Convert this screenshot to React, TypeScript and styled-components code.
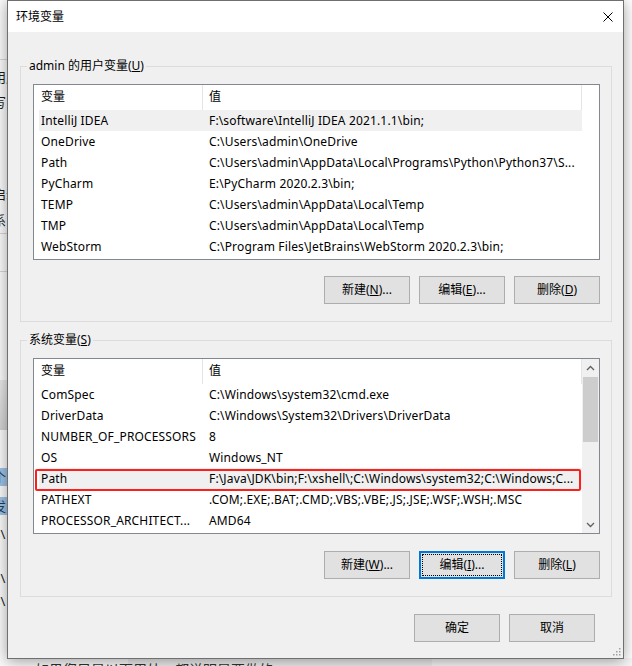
import React from "react";
import styled, { createGlobalStyle, css } from "styled-components";

const FONT = `"Noto Sans", "Noto Sans CJK SC", sans-serif`;

const GlobalStyle = createGlobalStyle`
  html, body { margin: 0; padding: 0; }
  body {
    width: 632px;
    height: 666px;
    overflow: hidden;
    background: #f3f3f3;
    font-family: ${FONT};
    -webkit-font-smoothing: antialiased;
  }
  * { box-sizing: border-box; }
`;

/* ---------- desktop & background window ---------- */

const Desktop = styled.div`
  position: relative;
  width: 632px;
  height: 666px;
  overflow: hidden;
`;

const BackWindow = styled.div`
  display: flex;
  flex-direction: column;
  height: 666px;
  background: #ffffff;
`;

const BackMain = styled.div`
  flex: 1;
  display: flex;
`;

const LeftStrip = styled.div`
  width: 40px;
  display: flex;
  flex-direction: column;
  background: #fbfbfb;
`;

const StripSpace = styled.div<{ $h: number }>`
  height: ${(p) => p.$h}px;
  flex: none;
`;

const StripLine = styled.div`
  height: 1px;
  flex: none;
  background: #d6d6d6;
`;

const StripBand = styled.div<{ $h: number }>`
  height: ${(p) => p.$h}px;
  flex: none;
  background: linear-gradient(#e9e9e9, #d2d2d2);
`;

const StripGlyph = styled.div<{ $hl?: boolean }>`
  height: 18px;
  flex: none;
  font-size: 13px;
  line-height: 18px;
  white-space: nowrap;
  color: #1b1b1b;
  margin-left: -7px;
  ${(p) =>
    p.$hl &&
    css`
      background: #9ec2e4;
      color: #203a5a;
    `}
`;

const BackBottom = styled.div`
  height: 8px;
  flex: none;
  background: linear-gradient(90deg, #fafafa 0 128px, #ececec 128px 432px, #f6f6f6 432px);
  overflow: hidden;
  padding-left: 35px;
  padding-top: 3px;
`;

const BackBottomText = styled.div`
  font-size: 14px;
  line-height: 18px;
  color: #333;
  white-space: nowrap;
`;

/* ---------- dialog ---------- */

const Dialog = styled.div`
  position: absolute;
  left: 7px;
  top: 0;
  width: 617px;
  height: 659px;
  border: 1px solid #6f6f6f;
  background: #f0f0f0;
  display: flex;
  flex-direction: column;
  box-shadow: 0 2px 14px rgba(0, 0, 0, 0.38);
  color: #000;
  font-size: 12px;
`;

const TitleBar = styled.div`
  height: 31px;
  flex: none;
  background: #ffffff;
  display: flex;
  align-items: center;
  justify-content: space-between;
  padding: 0 8px 0 8px;
`;

const TitleText = styled.div`
  font-size: 12px;
  line-height: 31px;
`;

const CloseButton = styled.div`
  width: 10px;
  height: 10px;
  margin-right: 2px;
  display: flex;
`;

const Body = styled.div`
  flex: 1;
  display: flex;
  flex-direction: column;
  padding: 26px 11px 0 12px;
  position: relative;
`;

const GroupBox = styled.fieldset<{ $gap?: number }>`
  margin: ${(p) => p.$gap ?? 0}px 0 0 0;
  padding: 10px 11px 17px 12px;
  border: 1px solid #dcdcdc;
  min-width: 0;
`;

const Legend = styled.legend`
  font-size: 12px;
  line-height: 16px;
  padding: 0 2px;
  margin-left: -6px;
  white-space: nowrap;
`;

const ListView = styled.div`
  height: 176px;
  border: 1px solid #828790;
  background: #ffffff;
  display: flex;
  overflow: hidden;
`;

const ListContent = styled.div`
  width: 548px;
  flex: none;
  display: flex;
  flex-direction: column;
`;

const HeaderRow = styled.div`
  display: grid;
  grid-template-columns: 169px 379px;
  height: 25px;
  flex: none;
`;

const HeaderCell = styled.div<{ $pad: number }>`
  border-right: 1px solid #e5e5e5;
  padding-left: ${(p) => p.$pad}px;
  line-height: 24px;
  font-size: 12px;
  white-space: nowrap;
`;

const Row = styled.div<{ $selected?: boolean; $marked?: boolean }>`
  position: relative;
  display: grid;
  grid-template-columns: 163px 380px;
  height: 21px;
  flex: none;
  margin-left: 5px;
  background: ${(p) => (p.$selected ? "#f0f0f0" : "transparent")};
  ${(p) =>
    p.$marked &&
    css`
      &::after {
        content: "";
        position: absolute;
        left: -4px;
        right: 1px;
        top: 1px;
        bottom: -2px;
        border: 2px solid #ff1f1a;
        border-radius: 2px;
        pointer-events: none;
      }
    `}
`;

const Cell = styled.div<{ $pad: number }>`
  padding-left: ${(p) => p.$pad}px;
  font-size: 12px;
  line-height: 21px;
  letter-spacing: 0.15px;
  white-space: nowrap;
  overflow: hidden;
`;

const ScrollBar = styled.div`
  width: 17px;
  flex: none;
  background: #f0f0f0;
  display: flex;
  flex-direction: column;
  margin-left: auto;
`;

const ScrollArrow = styled.div`
  height: 17px;
  flex: none;
  display: flex;
  align-items: center;
  justify-content: center;
`;

const ScrollThumb = styled.div`
  height: 65px;
  margin: 1px 1px 0 1px;
  background: #cdcdcd;
  flex: none;
`;

const ScrollTrack = styled.div`
  flex: 1;
`;

const ButtonRow = styled.div<{ $gap: number; $top: number; $right?: number }>`
  display: flex;
  justify-content: flex-end;
  gap: ${(p) => p.$gap}px;
  margin-top: ${(p) => p.$top}px;
  padding-right: ${(p) => p.$right ?? 0}px;
`;

const Button = styled.div<{ $focused?: boolean }>`
  width: 86px;
  height: 28px;
  background: #e1e1e1;
  border: 1px solid #adadad;
  display: flex;
  align-items: center;
  justify-content: center;
  font-size: 12px;
  line-height: 16px;
  white-space: nowrap;
  ${(p) =>
    p.$focused &&
    css`
      border: 2px solid #0078d7;
      outline: 1px dotted #000;
      outline-offset: -4px;
    `}
`;

const Grip = styled.div`
  position: absolute;
  right: 2px;
  bottom: 2px;
  width: 10px;
  height: 10px;
  display: flex;
`;

/* ---------- data ---------- */

type Var = { name: string; value: string; selected?: boolean; marked?: boolean };

const userVars: Var[] = [
  { name: "IntelliJ IDEA", value: "F:\\software\\IntelliJ IDEA 2021.1.1\\bin;", selected: true },
  { name: "OneDrive", value: "C:\\Users\\admin\\OneDrive" },
  { name: "Path", value: "C:\\Users\\admin\\AppData\\Local\\Programs\\Python\\Python37\\S..." },
  { name: "PyCharm", value: "E:\\PyCharm 2020.2.3\\bin;" },
  { name: "TEMP", value: "C:\\Users\\admin\\AppData\\Local\\Temp" },
  { name: "TMP", value: "C:\\Users\\admin\\AppData\\Local\\Temp" },
  { name: "WebStorm", value: "C:\\Program Files\\JetBrains\\WebStorm 2020.2.3\\bin;" },
];

const sysVars: Var[] = [
  { name: "ComSpec", value: "C:\\Windows\\system32\\cmd.exe" },
  { name: "DriverData", value: "C:\\Windows\\System32\\Drivers\\DriverData" },
  { name: "NUMBER_OF_PROCESSORS", value: "8" },
  { name: "OS", value: "Windows_NT" },
  {
    name: "Path",
    value: "F:\\Java\\JDK\\bin;F:\\xshell\\;C:\\Windows\\system32;C:\\Windows;C...",
    selected: true,
    marked: true,
  },
  { name: "PATHEXT", value: ".COM;.EXE;.BAT;.CMD;.VBS;.VBE;.JS;.JSE;.WSF;.WSH;.MSC" },
  { name: "PROCESSOR_ARCHITECT...", value: "AMD64" },
];

/* ---------- pieces ---------- */

const Chevron = ({ up }: { up?: boolean }) => (
  <svg width="9" height="6" viewBox="0 0 9 6">
    <polyline
      points={up ? "1,5 4.5,1.5 8,5" : "1,1 4.5,4.5 8,1"}
      fill="none"
      stroke="#606060"
      strokeWidth="1.3"
    />
  </svg>
);

const VarList = ({ vars, scroll }: { vars: Var[]; scroll?: boolean }) => (
  <ListView>
    <ListContent>
      <HeaderRow>
        <HeaderCell $pad={7}>变量</HeaderCell>
        <HeaderCell $pad={6}>值</HeaderCell>
      </HeaderRow>
      {vars.map((v) => (
        <Row key={v.name} $selected={v.selected} $marked={v.marked}>
          <Cell $pad={2}>{v.name}</Cell>
          <Cell $pad={7}>{v.value}</Cell>
        </Row>
      ))}
    </ListContent>
    {scroll && (
      <ScrollBar>
        <ScrollArrow>
          <Chevron up />
        </ScrollArrow>
        <ScrollThumb />
        <ScrollTrack />
        <ScrollArrow>
          <Chevron />
        </ScrollArrow>
      </ScrollBar>
    )}
  </ListView>
);

const Acc = ({ label, k, tail = "" }: { label: string; k: string; tail?: string }) => (
  <>
    {label}(<u>{k}</u>){tail}
  </>
);

export default function App() {
  return (
    <>
      <GlobalStyle />
      <Desktop>
        <BackWindow>
          <BackMain>
            <LeftStrip>
              <StripSpace $h={59} />
              <StripLine />
              <StripSpace $h={8} />
              <StripGlyph>用户</StripGlyph>
              <StripSpace $h={7} />
              <StripGlyph>写</StripGlyph>
              <StripSpace $h={74} />
              <StripGlyph>启动</StripGlyph>
              <StripSpace $h={8} />
              <StripGlyph>系</StripGlyph>
              <StripSpace $h={4} />
              <StripLine />
              <StripSpace $h={37} />
              <StripLine />
              <StripSpace $h={108} />
              <StripBand $h={50} />
              <StripSpace $h={38} />
              <StripGlyph $hl>个</StripGlyph>
              <StripSpace $h={11} />
              <StripGlyph $hl>发</StripGlyph>
              <StripSpace $h={10} />
              <StripGlyph>&lt;\</StripGlyph>
              <StripSpace $h={26} />
              <StripGlyph>&lt;\</StripGlyph>
              <StripSpace $h={5} />
              <StripGlyph>&lt;\</StripGlyph>
            </LeftStrip>
          </BackMain>
          <BackBottom>
            <BackBottomText>如果您只是以下用处，都说明是要做的</BackBottomText>
          </BackBottom>
        </BackWindow>

        <Dialog>
          <TitleBar>
            <TitleText>环境变量</TitleText>
            <CloseButton>
              <svg width="10" height="10" viewBox="0 0 10 10">
                <path d="M0.5 0.5 L9.5 9.5 M9.5 0.5 L0.5 9.5" stroke="#000" strokeWidth="1" />
              </svg>
            </CloseButton>
          </TitleBar>
          <Body>
            <GroupBox>
              <Legend>
                admin 的用户变量(<u>U</u>)
              </Legend>
              <VarList vars={userVars} />
              <ButtonRow $gap={9} $top={16}>
                <Button>
                  <Acc label="新建" k="N" tail="..." />
                </Button>
                <Button>
                  <Acc label="编辑" k="E" tail="..." />
                </Button>
                <Button>
                  <Acc label="删除" k="D" />
                </Button>
              </ButtonRow>
            </GroupBox>

            <GroupBox $gap={10}>
              <Legend>
                系统变量(<u>S</u>)
              </Legend>
              <VarList vars={sysVars} scroll />
              <ButtonRow $gap={9} $top={17}>
                <Button>
                  <Acc label="新建" k="W" tail="..." />
                </Button>
                <Button $focused>
                  <Acc label="编辑" k="I" tail="..." />
                </Button>
                <Button>
                  <Acc label="删除" k="L" />
                </Button>
              </ButtonRow>
            </GroupBox>

            <ButtonRow $gap={9} $top={17} $right={17}>
              <Button>确定</Button>
              <Button>取消</Button>
            </ButtonRow>

            <Grip>
              <svg width="10" height="10" viewBox="0 0 10 10">
                {[
                  [8, 2],
                  [5, 5],
                  [8, 5],
                  [2, 8],
                  [5, 8],
                  [8, 8],
                ].map(([x, y]) => (
                  <rect key={`${x}-${y}`} x={x} y={y} width="1.5" height="1.5" fill="#a0a0a0" />
                ))}
              </svg>
            </Grip>
          </Body>
        </Dialog>
      </Desktop>
    </>
  );
}
